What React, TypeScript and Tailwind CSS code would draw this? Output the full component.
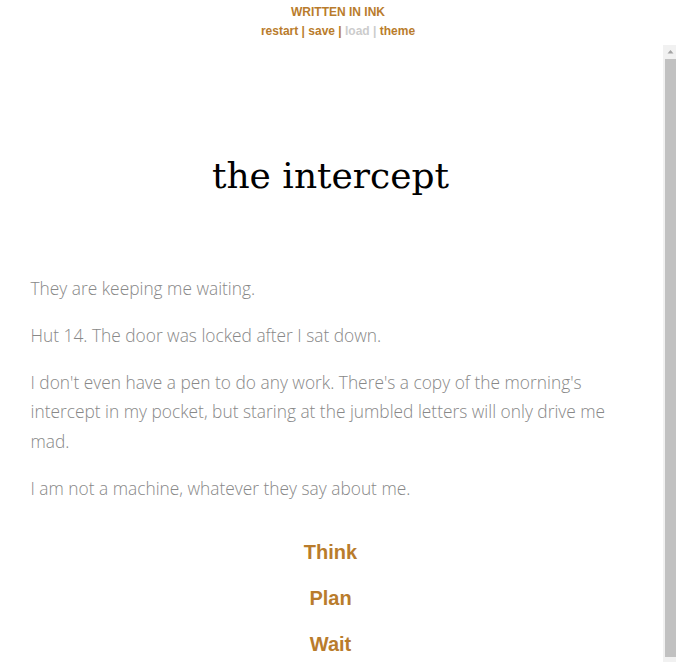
import React from 'react';

const paragraphs = [
  'They are keeping me waiting.',
  'Hut 14. The door was locked after I sat down.',
  "I don't even have a pen to do any work. There's a copy of the morning's intercept in my pocket, but staring at the jumbled letters will only drive me mad.",
  'I am not a machine, whatever they say about me.',
];

const choices = ['Think', 'Plan', 'Wait'];

export default function App() {
  return (
    <div className="h-screen overflow-hidden flex flex-col bg-white">
      {/* Header */}
      <header className="shrink-0 h-[45px] pt-[4px] pb-[6px] text-center text-[12px] font-bold font-['Liberation_Sans',Arial,sans-serif] text-[#b97c2c]">
        <div className="leading-[16px]">WRITTEN IN INK</div>
        <div className="leading-[16px] mt-[3px]">
          <span>restart</span> | <span>save</span> | <span className="text-[#ccc]">load | </span>
          <span>theme</span>
        </div>
      </header>

      {/* Story + scrollbar */}
      <div className="flex-1 min-h-0 flex">
        <div className="flex-1 min-w-0 overflow-hidden pr-[2px]">
          <div className="w-[600px] mx-auto pb-[40px]">
            <h1 className="pt-[108px] text-center text-[36px] leading-[46px] text-black font-['DejaVu_Serif','Times_New_Roman',serif]">
              the intercept
            </h1>

            <div className="mt-[75px] flex flex-col gap-[17.5px] font-['Open_Sans',sans-serif] font-light text-[17.33px] leading-[1.7em] text-[#888]">
              {paragraphs.map((p, i) => (
                <p key={i}>{p}</p>
              ))}
            </div>

            <div className="mt-[33px] flex flex-col gap-[13px] text-center">
              {choices.map((c) => (
                <a
                  key={c}
                  href="#"
                  className="block text-[20px] leading-[33px] font-bold text-[#b97c2c] font-['Liberation_Sans',Arial,sans-serif] no-underline"
                >
                  {c}
                </a>
              ))}
            </div>
          </div>
        </div>

        {/* Scrollbar */}
        <div className="shrink-0 w-[13px] flex flex-col bg-[#f1f1f1]">
          <div className="h-[14px] shrink-0 flex items-center justify-center">
            <svg width="13" height="14" viewBox="0 0 13 14">
              <polygon points="4.5,8.5 10.5,8.5 7.5,5" fill="#a3a3a3" />
            </svg>
          </div>
          <div className="h-[598px] shrink-0 ml-[2px] bg-[#c1c1c1]" />
        </div>
      </div>
    </div>
  );
}
